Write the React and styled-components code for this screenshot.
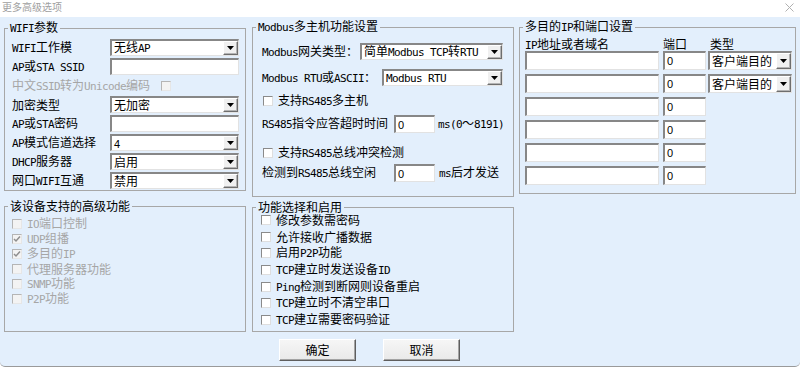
import React from 'react';
import styled, { createGlobalStyle } from 'styled-components';

const GlobalStyle = createGlobalStyle`
  html, body { margin: 0; padding: 0; background: #ffffff; }
  body {
    font-family: "Noto Sans CJK SC", "Liberation Sans", sans-serif;
    font-size: 12px;
    line-height: 14px;
    color: #000;
  }
  * { box-sizing: border-box; }
`;

// latin runs get a narrow mono face, close to NSimSun on a Windows dialog
const Lat = styled.span`
  font-family: "DejaVu Sans Mono", "Liberation Mono", monospace;
  font-size: 11px;
  letter-spacing: -0.62px;
`;

const Num = styled.span`
  font-family: "Liberation Sans", sans-serif;
  font-size: 11px;
`;

function T({ s }) {
  return s.split(/([\x20-\x7e]+)/).map((part, i) =>
    /^[\x20-\x7e]+$/.test(part) ? <Lat key={i}>{part}</Lat> : part
  );
}

const Window = styled.div`
  width: 800px;
  height: 370px;
  overflow: hidden;
  display: flex;
  flex-direction: column;
  background: #fff;
`;

const TitleBar = styled.div`
  height: 17px;
  flex: none;
  display: flex;
  align-items: center;
  justify-content: space-between;
  padding: 0 6px 3px 2px;
  color: #a0a0a0;
  font-size: 10px;
`;

const Body = styled.div`
  height: 350px;
  flex: none;
  display: flex;
  padding: 2px 0 0 4px;
  background: #e3effc;
  border-bottom: 1px solid #9a9a9a;
  border-radius: 0 0 5px 5px;
`;

const Column = styled.div`
  width: ${p => p.$w}px;
  flex: none;
  display: flex;
  flex-direction: column;
  padding-top: ${p => p.$pt || 0}px;
  margin-right: ${p => p.$mr || 0}px;
`;

const Group = styled.fieldset`
  margin: ${p => p.$mt || 0}px 0 0 0;
  padding: 0;
  min-width: 0;
  height: ${p => p.$h}px;
  border: 1px solid #a7a7a7;
`;

const Legend = styled.legend`
  margin-left: 3px;
  padding: 0 2px;
  line-height: 14px;
  font-size: 12px;
`;

const Inner = styled.div`
  display: flex;
  flex-direction: column;
  gap: ${p => p.$gap || 0}px;
  padding: ${p => p.$pad};
  margin-top: ${p => p.$mt || 0}px;
`;

const FormRow = styled.div`
  display: flex;
  align-items: center;
  height: ${p => p.$h || 17}px;
  margin-top: ${p => p.$mt || 0}px;
  white-space: nowrap;
`;

const Label = styled.span`
  width: ${p => (p.$w ? `${p.$w}px` : 'auto')};
  flex: none;
  white-space: nowrap;
  color: ${p => (p.$dim ? '#a6a6a6' : '#000')};
`;

const Suffix = styled.span`
  margin-left: ${p => p.$ml || 3}px;
  white-space: nowrap;
`;

const Sunken = styled.div`
  width: ${p => p.$w}px;
  height: ${p => p.$h}px;
  flex: none;
  display: flex;
  align-items: center;
  background: #fff;
  border-style: solid;
  border-width: 2px 1px 1px 2px;
  border-color: #878787 #e2e2e2 #e2e2e2 #878787;
  padding-left: 2px;
  white-space: nowrap;
`;

const ComboText = styled.span`
  flex: 1;
  min-width: 0;
`;

const DropBtn = styled.span`
  width: 15px;
  align-self: stretch;
  flex: none;
  display: flex;
  align-items: center;
  justify-content: center;
  background: #f0f0f0;
  border: 1px solid;
  border-color: #ffffff #6e6e6e #6e6e6e #ffffff;
  box-shadow: inset -1px -1px 0 #b4b4b4;
`;

const Box = styled.span`
  width: 10px;
  height: 10px;
  flex: none;
  display: inline-flex;
  align-items: center;
  justify-content: center;
  margin-left: ${p => p.$ml || 0}px;
  margin-right: ${p => (p.$mr === undefined ? 5 : p.$mr)}px;
  border: 1px solid;
  border-color: ${p => (p.$dim ? '#b5b5b5 #e6e6e6 #e6e6e6 #b5b5b5' : '#8a8a8a #dedede #dedede #8a8a8a')};
  background: ${p => (p.$dim ? '#f3f3f3' : '#fff')};
`;

const CheckText = styled.span`
  white-space: nowrap;
  color: ${p => (p.$dim ? '#a6a6a6' : '#000')};
`;

const IpHead = styled.div`
  display: grid;
  grid-template-columns: 138px 45px 84px;
  height: 14px;
  margin-top: 2px;
`;

const IpGrid = styled.div`
  display: grid;
  grid-template-columns: 138px 45px 84px;
  grid-auto-rows: 19px;
  row-gap: 4px;
`;

const HeadCell = styled.span`
  padding-left: ${p => p.$pl || 0}px;
  white-space: nowrap;
`;

const Buttons = styled.div`
  display: flex;
  gap: 27px;
  margin-top: 7px;
  padding-left: 27px;
`;

const Button = styled.button`
  width: 77px;
  height: 22px;
  padding: 0;
  font-family: "Noto Sans CJK SC", sans-serif;
  font-size: 12px;
  line-height: 14px;
  color: #000;
  background: linear-gradient(#f6f6f6, #e9e9e9);
  border: 1px solid;
  border-color: #ffffff #5e5e5e #5e5e5e #ffffff;
  box-shadow: inset -1px -1px 0 #a3a3a3;
`;

const Bottom = styled.div`
  flex: 1;
  background: #fff;
`;

function Arrow() {
  return (
    <svg width="7" height="4" viewBox="0 0 7 4">
      <polygon points="0,0 7,0 3.5,4" fill="#000" />
    </svg>
  );
}

function Combo({ w, h = 17, value }) {
  const isNum = /^\d+$/.test(value);
  return (
    <Sunken $w={w} $h={h}>
      <ComboText>{isNum ? <Num>{value}</Num> : <T s={value} />}</ComboText>
      <DropBtn><Arrow /></DropBtn>
    </Sunken>
  );
}

function Field({ w, h = 17, value = '' }) {
  return <Sunken $w={w} $h={h}>{value && <Num>{value}</Num>}</Sunken>;
}

function Check({ checked, dim, ml, mr }) {
  return (
    <Box $dim={dim} $ml={ml} $mr={mr}>
      {checked && (
        <svg width="8" height="8" viewBox="0 0 8 8">
          <polyline points="1,4 3,6 7,1.5" fill="none" stroke="#8e8e8e" strokeWidth="1.5" />
        </svg>
      )}
    </Box>
  );
}

const advanced = [
  { text: 'IO端口控制', checked: false },
  { text: 'UDP组播', checked: true },
  { text: '多目的IP', checked: true },
  { text: '代理服务器功能', checked: false },
  { text: 'SNMP功能', checked: false },
  { text: 'P2P功能', checked: false },
];

const features = [
  '修改参数需密码',
  '允许接收广播数据',
  '启用P2P功能',
  'TCP建立时发送设备ID',
  'Ping检测到断网则设备重启',
  'TCP建立时不清空串口',
  'TCP建立需要密码验证',
];

const ipRows = [true, true, false, false, false, false];

function App() {
  return (
    <Window>
      <GlobalStyle />
      <TitleBar>
        <span>更多高级选项</span>
        <svg width="9" height="9" viewBox="0 0 9 9">
          <path d="M0.5 0.5 L8.5 8.5 M8.5 0.5 L0.5 8.5" stroke="#b0b0b0" strokeWidth="1" />
        </svg>
      </TitleBar>
      <Body>
        <Column $w={242} $pt={1} $mr={6}>
          <Group $h={171}>
            <Legend><T s="WIFI参数" /></Legend>
            <Inner $pad="3px 0 0 7px" $gap={2}>
              <FormRow><Label $w={98}><T s="WIFI工作模" /></Label><Combo w={129} value="无线AP" /></FormRow>
              <FormRow><Label $w={98}><T s="AP或STA SSID" /></Label><Field w={129} /></FormRow>
              <FormRow>
                <Label $dim><T s="中文SSID转为Unicode编码" /></Label>
                <Check dim ml={11} />
              </FormRow>
              <FormRow><Label $w={98}>加密类型</Label><Combo w={129} value="无加密" /></FormRow>
              <FormRow><Label $w={98}><T s="AP或STA密码" /></Label><Field w={129} /></FormRow>
              <FormRow><Label $w={98}><T s="AP模式信道选择" /></Label><Combo w={129} value="4" /></FormRow>
              <FormRow><Label $w={98}><T s="DHCP服务器" /></Label><Combo w={129} value="启用" /></FormRow>
              <FormRow><Label $w={98}><T s="网口WIFI互通" /></Label><Combo w={129} value="禁用" /></FormRow>
            </Inner>
          </Group>
          <Group $h={133} $mt={8}>
            <Legend>该设备支持的高级功能</Legend>
            <Inner $pad="3px 0 0 7px">
              {advanced.map(item => (
                <FormRow key={item.text} $h={15}>
                  <Check dim checked={item.checked} />
                  <CheckText $dim><T s={item.text} /></CheckText>
                </FormRow>
              ))}
            </Inner>
          </Group>
        </Column>

        <Column $w={262} $mr={5}>
          <Group $h={178}>
            <Legend><T s="Modbus多主机功能设置" /></Legend>
            <Inner $pad="0 0 0 9px">
              <FormRow $mt={8}>
                <Label $w={98}><T s="Modbus网关类型：" /></Label>
                <Combo w={143} value="简单Modbus TCP转RTU" />
              </FormRow>
              <FormRow $mt={9}>
                <Label $w={120}><T s="Modbus RTU或ASCII：" /></Label>
                <Combo w={121} value="Modbus RTU" />
              </FormRow>
              <FormRow $mt={7} $h={16}>
                <Check ml={1} />
                <CheckText><T s="支持RS485多主机" /></CheckText>
              </FormRow>
              <FormRow $mt={6} $h={18}>
                <Label $w={132}><T s="RS485指令应答超时时间" /></Label>
                <Field w={41} h={18} value="0" />
                <Suffix><T s="ms(0" />～<T s="8191)" /></Suffix>
              </FormRow>
              <FormRow $mt={12} $h={16}>
                <Check ml={1} />
                <CheckText><T s="支持RS485总线冲突检测" /></CheckText>
              </FormRow>
              <FormRow $mt={3} $h={18}>
                <Label $w={132}><T s="检测到RS485总线空闲" /></Label>
                <Field w={41} h={18} value="0" />
                <Suffix $ml={4}><T s="ms后才发送" /></Suffix>
              </FormRow>
            </Inner>
          </Group>
          <Group $h={132} $mt={3}>
            <Legend>功能选择和启用</Legend>
            <Inner $pad="0 0 0 8px" $mt={-2}>
              {features.map(text => (
                <FormRow key={text} $h={16.6}>
                  <Check />
                  <CheckText><T s={text} /></CheckText>
                </FormRow>
              ))}
            </Inner>
          </Group>
          <Buttons>
            <Button>确定</Button>
            <Button>取消</Button>
          </Buttons>
        </Column>

        <Column $w={277}>
          <Group $h={175}>
            <Legend><T s="多目的IP和端口设置" /></Legend>
            <Inner $pad="0 0 0 5px">
              <IpHead>
                <HeadCell><T s="IP地址或者域名" /></HeadCell>
                <HeadCell>端口</HeadCell>
                <HeadCell $pl={2}>类型</HeadCell>
              </IpHead>
              <IpGrid>
                {ipRows.map((hasType, i) => (
                  <React.Fragment key={i}>
                    <Field w={134} h={19} />
                    <Field w={43} h={19} value="0" />
                    {hasType ? <Combo w={84} h={19} value="客户端目的" /> : <span />}
                  </React.Fragment>
                ))}
              </IpGrid>
            </Inner>
          </Group>
        </Column>
      </Body>
      <Bottom />
    </Window>
  );
}

export default App;
